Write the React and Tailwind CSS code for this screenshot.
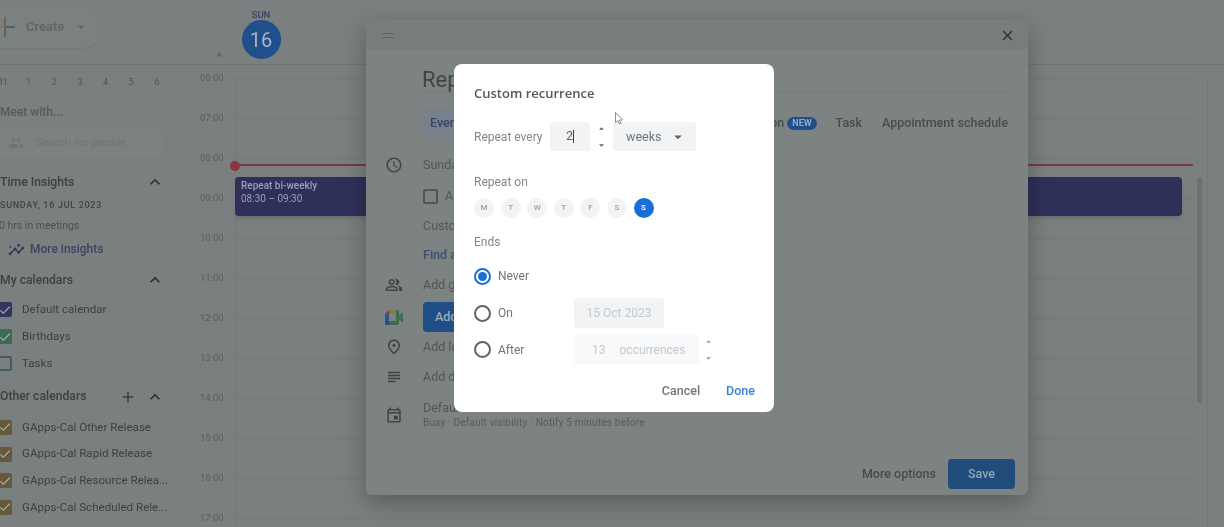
import { MdAccessTime, MdAdd, MdArrowDropDown, MdCheck, MdClose, MdExpandLess, MdInsights, MdOutlineEvent, MdOutlinePeopleAlt, MdOutlinePlace, MdPeople, MdSubject } from "react-icons/md";

const hours = ["06:00", "07:00", "08:00", "09:00", "10:00", "11:00", "12:00", "13:00", "14:00", "15:00", "16:00", "17:00"];
const days = ["M", "T", "W", "T", "F", "S"];

function CalendarRow({ label, box, checked = true }) {
    return (
        <div className="flex items-center h-[26.7px]">
            <span className={`w-[15px] h-[15px] -ml-[3px] rounded-[2px] flex items-center justify-center shrink-0 ${box}`}>
                {checked && <MdCheck className="w-[14px] h-[14px] text-[#aeb2b2]" />}
            </span>
            <span className="ml-[10px] text-[11.6px] text-[#3c4141] whitespace-nowrap">{label}</span>
        </div>
    );
}

function SectionHead({ label, extra }) {
    return (
        <div className="flex items-center justify-between h-[20px] pr-[35px]">
            <span className="text-[12.2px] font-medium text-[#3c4141] whitespace-nowrap">{label}</span>
            <div className="flex items-center gap-[8px]">
                {extra}
                <MdExpandLess className="w-[20px] h-[20px] text-[#2b2f2f]" />
            </div>
        </div>
    );
}

function Sidebar() {
    return (
        <aside className="w-[200px] shrink-0 overflow-hidden flex flex-col">
            <div className="h-[65px] border-b border-[#6f7474] pr-[10px] flex items-center">
                <div className="flex items-center h-[42px] -ml-[18px] pl-[18px] pr-[13px] rounded-full bg-[#7b8080] shadow-[0_1px_2px_rgba(0,0,0,0.06)] -mt-[11px]">
                    <svg viewBox="0 0 20 20" className="w-[20px] h-[20px] -ml-[5px]">
                        <path d="M9 0h2v9H9z" fill="#7d5f52" />
                        <path d="M9 11h2v9H9z" fill="#4f6b59" />
                        <path d="M0 9h9v2H0z" fill="#85794c" />
                        <path d="M11 9h9v2h-9z" fill="#565d66" />
                        <path d="M9 9h2v2H9z" fill="#756a52" />
                    </svg>
                    <span className="ml-[11px] text-[13px] font-medium text-[#5f6464]">Create</span>
                    <MdArrowDropDown className="ml-[9px] w-[16px] h-[16px] text-[#5f6464]" />
                </div>
            </div>
            <div className="grid grid-cols-[repeat(7,25.7px)] -ml-[10px] h-[34px] pt-[1px] items-center text-center text-[9px] text-[#505555]">
                {["31", "1", "2", "3", "4", "5", "6"].map((d) => <span key={d}>{d}</span>)}
            </div>
            <div className="h-[24px] flex items-center text-[12px] font-medium text-[#555a5a] mt-[1px]">Meet with...</div>
            <div className="mt-[5px] h-[28px] w-[163px] flex items-center pl-[8px] bg-[#7c8181] rounded-[3px]">
                <MdPeople className="w-[16px] h-[16px] text-[#6f7474]" />
                <span className="ml-[11px] text-[11.7px] text-[#6f7474]">Search for people</span>
            </div>
            <div className="mt-[15px]">
                <SectionHead label="Time Insights" />
            </div>
            <div className="mt-[6px] h-[16px] flex items-center text-[9px] font-medium tracking-[0.7px] text-[#3f4444] whitespace-nowrap">SUNDAY, 16 JUL 2023</div>
            <div className="mt-[4px] h-[16px] flex items-center text-[10.5px] text-[#4c5151] -ml-[1px] whitespace-nowrap">0 hrs in meetings</div>
            <div className="mt-[3px] h-[24px] w-[117px] flex items-center pl-[8px]">
                <MdInsights className="w-[17px] h-[17px] text-[#2f3258]" />
                <span className="ml-[5px] text-[12px] font-medium text-[#3a4466] whitespace-nowrap">More insights</span>
            </div>
            <div className="mt-[9px] mb-[6.5px]">
                <SectionHead label="My calendars" />
            </div>
            <CalendarRow label="Default calendar" box="bg-[#343462]" />
            <CalendarRow label="Birthdays" box="bg-[#3a6b54]" />
            <CalendarRow label="Tasks" box="border-2 border-[#3f5f5a]" checked={false} />
            <div className="mt-[10px] mb-[7.5px]">
                <SectionHead label="Other calendars" extra={<MdAdd className="w-[18px] h-[18px] text-[#3c4141]" />} />
            </div>
            <CalendarRow label="GApps-Cal Other Release" box="bg-[#66583a]" />
            <CalendarRow label="GApps-Cal Rapid Release" box="bg-[#66583a]" />
            <CalendarRow label="GApps-Cal Resource Relea..." box="bg-[#66583a]" />
            <CalendarRow label="GApps-Cal Scheduled Rele..." box="bg-[#66583a]" />
        </aside>
    );
}

function Grid() {
    return (
        <main className="flex-1 flex flex-col min-w-0">
            <div className="h-[65px] border-b border-[#6f7474] flex shrink-0">
                <div className="w-[23px] shrink-0 flex items-end justify-end pb-[3px] pr-[1px] text-[8px] text-[#555a5a]">A</div>
                <div className="ml-[18px] w-[40px] flex flex-col items-center pt-[9px]">
                    <span className="text-[9.5px] leading-[12px] font-medium text-[#3a4466]">SUN</span>
                    <span className="w-[39px] h-[39px] -mt-[1px] rounded-full bg-[#204f8c] flex items-center justify-center text-[20px] text-[#a9b5c2]">16</span>
                </div>
            </div>
            <div className="flex-1 flex relative pt-[13px]">
                <div className="w-[35px] shrink-0 flex flex-col">
                    {hours.map((h) => (
                        <div key={h} className="h-[40px] text-[9.5px] leading-[16px] text-[#595e5e]">
                            <span className="block -translate-y-[8px]">{h}</span>
                        </div>
                    ))}
                </div>
                <div className="w-[958px] shrink-0 border-l border-[#747979] flex flex-col">
                    {hours.map((h) => <div key={h} className="h-[40px] shrink-0 border-t border-[#727777]" />)}
                </div>
                <div className="w-[14px] shrink-0 relative">
                    <div className="absolute left-[4px] top-[99px] w-[5px] h-[226px] rounded-full bg-[#6c7171]" />
                </div>
                <div className="flex-1 border-l border-[#727777]" />
                <div className="absolute left-[35px] top-[99px] w-[958px] h-[2px] bg-[#7c3a3d]" />
                <div className="absolute left-[30px] top-[95.5px] w-[10px] h-[10px] rounded-full bg-[#8c3540]" />
                <div className="absolute left-[35px] top-[112px] w-[947px] h-[39px] rounded-[4px] bg-[#2f3059] shadow-md px-[6px] pt-[3px] text-[10px] leading-[12.5px] font-medium text-[#9a9fb8]">
                    <div>Repeat bi-weekly</div>
                    <div className="font-normal">08:30 – 09:30</div>
                </div>
            </div>
        </main>
    );
}

function EventRow({ icon, children, className = "" }) {
    return (
        <div className={`flex items-center ${className}`}>
            <div className="w-[57px] pl-[19px] shrink-0 text-[#3f4444]">{icon}</div>
            <div className="min-w-0 whitespace-nowrap text-[12.5px] text-[#505555]">{children}</div>
        </div>
    );
}

function MeetIcon() {
    return (
        <svg viewBox="0 0 18 15" className="w-[18px] h-[15px]">
            <path d="M4 0L0 4h4z" fill="#7c3f38" />
            <path d="M0 4h4v7H0z" fill="#2f5688" />
            <path d="M0 11h4v4H1.500A1.500 1.500 0 0 1 0 13.500z" fill="#264a7a" />
            <path d="M4 0h7v4H4z" fill="#857a44" />
            <path d="M4 11h7v4H4z" fill="#3f6a4c" />
            <path d="M11 0h1.500A1.500 1.500 0 0 1 14 1.500V13.500A1.500 1.500 0 0 1 12.500 15H11z" fill="#3f6e4f" />
            <path d="M14 5.500L18 2v11l-4-3.500z" fill="#3f6e4f" />
        </svg>
    );
}

function EventPanel() {
    return (
        <section className="absolute left-[366px] top-[20px] w-[662px] h-[475px] flex flex-col rounded-b-[6px] bg-[#7d8282] shadow-[0_8px_24px_rgba(0,0,0,0.28)] blur-[0.5px]">
            <header className="h-[29px] shrink-0 bg-[#777c7c] flex items-center justify-between pl-[16px] pr-[12px] pt-[1px]">
                <div className="w-[12px] h-[5px] border-y border-[#5f6464]" />
                <MdClose className="w-[17px] h-[17px] text-[#2d3131]" />
            </header>
            <div className="h-[44px] pt-[18px] ml-[57px] mr-[18px] border-b border-[#777c7c] flex items-center text-[22px] text-[#3f4444] shrink-0">
                <span className="-ml-[1px]">Repeat bi-weekly</span>
            </div>
            <div className="h-[28px] mt-[16px] ml-[57px] mr-[20px] flex items-center shrink-0 text-[12.5px] font-medium text-[#474c4c] whitespace-nowrap">
                <span className="h-[28px] px-[7px] rounded-[4px] bg-[#78808c] text-[#3a4466] flex items-center">Event</span>
                <div className="ml-auto flex items-center">
                    <span>Working location</span>
                    <span className="ml-[3px] px-[5px] h-[13px] rounded-full bg-[#204f8c] text-[9px] leading-[13px] font-bold text-[#98a8ba]">NEW</span>
                    <span className="ml-[19px]">Task</span>
                    <span className="ml-[20px]">Appointment schedule</span>
                </div>
            </div>
            <EventRow className="h-[20px] mt-[18px] shrink-0" icon={<MdAccessTime className="w-[18px] h-[18px]" />}>Sunday, 16 July</EventRow>
            <div className="h-[16px] mt-[13px] ml-[57px] flex items-center shrink-0 text-[12.5px] text-[#505555]">
                <span className="w-[15px] h-[15px] rounded-[2px] border-2 border-[#505555]" />
                <span className="ml-[7px]">All day</span>
            </div>
            <div className="h-[18px] mt-[13px] ml-[57px] shrink-0 text-[12.5px] text-[#505555] whitespace-nowrap">Custom</div>
            <div className="h-[18px] mt-[11px] ml-[57px] shrink-0 text-[12.5px] font-medium text-[#3c4f70] whitespace-nowrap">Find a time</div>
            <EventRow className="h-[20px] mt-[11px] shrink-0" icon={<MdOutlinePeopleAlt className="w-[18px] h-[18px]" />}>Add guests</EventRow>
            <div className="h-[30px] mt-[7px] shrink-0 flex items-center">
                <div className="w-[57px] pl-[19px] shrink-0"><MeetIcon /></div>
                <span className="h-[30px] px-[12px] rounded-[4px] bg-[#204f88] text-[12.5px] text-[#98a8ba] font-medium flex items-center whitespace-nowrap">Add Google Meet</span>
            </div>
            <EventRow className="h-[20px] mt-[5px] shrink-0" icon={<MdOutlinePlace className="w-[18px] h-[18px]" />}>Add location</EventRow>
            <EventRow className="h-[20px] mt-[10px] shrink-0" icon={<MdSubject className="w-[18px] h-[18px]" />}>Add description</EventRow>
            <EventRow className="h-[31px] mt-[12px] shrink-0" icon={<MdOutlineEvent className="w-[18px] h-[18px]" />}>
                <div className="leading-[15px]">Default calendar</div>
                <div className="text-[10px] leading-[15px] tracking-[0.2px] text-[#565b5b]">Busy · Default visibility · Notify 5 minutes before</div>
            </EventRow>
            <div className="mt-auto mb-[6px] pr-[13px] flex items-center justify-end">
                <span className="text-[12.5px] font-medium text-[#474c4c]">More options</span>
                <span className="ml-[12px] w-[67px] h-[30px] rounded-[4px] bg-[#204c7c] flex items-center justify-center text-[12.5px] font-medium text-[#94a6ba]">Save</span>
            </div>
        </section>
    );
}

function Spinner({ className = "" }) {
    return (
        <div className={`flex flex-col justify-between items-center h-[20px] ${className}`}>
            <svg viewBox="0 0 6 3" className="w-[5px] h-[3px]"><path d="M0 3l3-3 3 3z" fill="currentColor" /></svg>
            <svg viewBox="0 0 6 3" className="w-[5px] h-[3px]"><path d="M0 0l3 3 3-3z" fill="currentColor" /></svg>
        </div>
    );
}

function Radio({ on, label, children, className = "" }) {
    return (
        <div className={`flex items-center ${className}`}>
            <span className={`w-[17px] h-[17px] rounded-full border-2 flex items-center justify-center shrink-0 ${on ? "border-[#1a6fd6]" : "border-[#5f6368]"}`}>
                {on && <span className="w-[9px] h-[9px] rounded-full bg-[#1a6fd6]" />}
            </span>
            <span className="ml-[7px] w-[76px] shrink-0 text-[12px] text-[#70757a]">{label}</span>
            {children}
        </div>
    );
}

function RecurrenceDialog() {
    return (
        <section className="absolute left-[454px] top-[64px] w-[320px] h-[348px] rounded-[8px] bg-white pl-[20px] pr-[19px] pt-[20px] blur-[0.3px]">
            <h2 className="h-[18px] leading-[18px] text-[13px] font-semibold text-[#55595d] font-['Open_Sans','Roboto',sans-serif]">Custom recurrence</h2>
            <div className="mt-[20px] h-[29px] flex items-center">
                <span className="w-[76px] shrink-0 text-[12px] text-[#80868b]">Repeat every</span>
                <div className="w-[40px] h-[29px] rounded-[3px] bg-[#f1f3f4] flex items-center justify-center text-[12.5px] text-[#5f6368]">
                    2<span className="w-px h-[13px] bg-[#3c4043]" />
                </div>
                <Spinner className="w-[23px] text-[#5f6368]" />
                <div className="w-[83px] h-[29px] rounded-[3px] bg-[#f1f3f4] pl-[13px] pr-[9px] pt-[1px] flex items-center justify-between text-[12.5px] text-[#70757a]">
                    weeks
                    <MdArrowDropDown className="w-[18px] h-[18px] text-[#5f6368]" />
                </div>
            </div>
            <div className="mt-[23px] h-[16px] leading-[16px] text-[12px] text-[#80868b]">Repeat on</div>
            <div className="mt-[8px] flex gap-[6.6px]">
                {days.map((d, i) => (
                    <span key={i} className="w-[20px] h-[20px] rounded-full bg-[#f1f3f4] flex items-center justify-center text-[8px] font-medium text-[#9aa0a6]">{d}</span>
                ))}
                <span className="w-[20px] h-[20px] rounded-full bg-[#1a6fd6] flex items-center justify-center text-[8px] font-bold text-[#e8f0fe]">S</span>
            </div>
            <div className="mt-[16px] h-[16px] leading-[16px] text-[12px] text-[#80868b]">Ends</div>
            <Radio on label="Never" className="mt-[11px] h-[30px]" />
            <Radio label="On" className="mt-[7px] h-[30px]">
                <div className="w-[90px] h-[30px] rounded-[3px] bg-[#f1f3f4] flex items-center justify-center text-[12px] text-[#c4c8cc]">15 Oct 2023</div>
            </Radio>
            <Radio label="After" className="mt-[7px] h-[29px]">
                <div className="w-[125px] h-[29px] rounded-[3px] bg-[#f8f9fa] flex items-center text-[12px] text-[#c4c8cc]">
                    <span className="ml-[18px]">13</span>
                    <span className="ml-[14px]">occurrences</span>
                </div>
                <Spinner className="w-[18px] text-[#9aa0a6]" />
            </Radio>
            <div className="mt-[17px] h-[20px] flex items-center justify-end text-[12.5px]">
                <span className="text-[#70757a] font-medium">Cancel</span>
                <span className="ml-[26px] text-[#3b82d6] font-medium">Done</span>
            </div>
        </section>
    );
}

export default function App() {
    return (
        <div className="w-[1224px] h-[527px] relative overflow-hidden bg-[#7a7f7f] font-['Roboto',sans-serif]">
            <div className="flex h-full blur-[0.5px]">
                <Sidebar />
                <Grid />
            </div>
            <EventPanel />
            <RecurrenceDialog />
            <svg viewBox="0 0 8 13" className="absolute left-[615px] top-[112px] w-[8px] h-[13px]">
                <path d="M.5.5v10l2.500-2 1.500 3.500 1.500-.6L4.500 8H7.500z" fill="#fff" stroke="#70757a" strokeWidth=".8" />
            </svg>
        </div>
    );
}
